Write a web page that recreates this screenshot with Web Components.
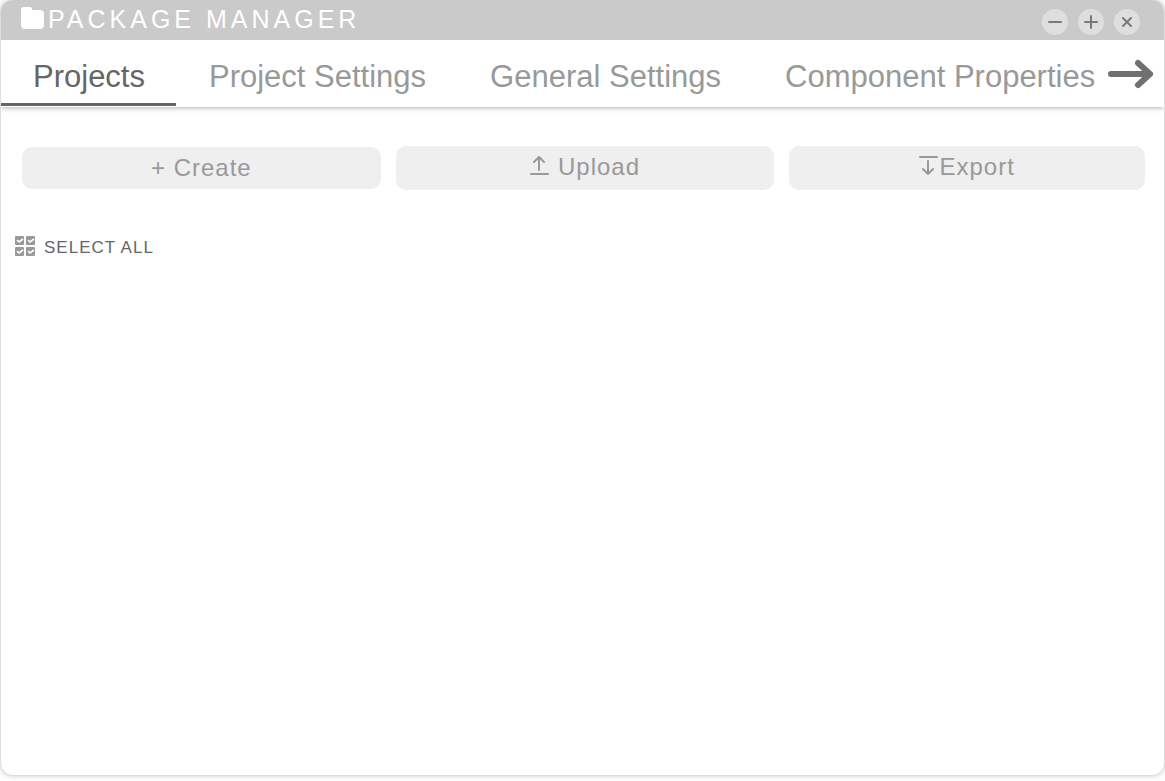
<!DOCTYPE html>
<html lang="en">
<head>
<meta charset="utf-8">
<title>Package Manager</title>
<style>
html, body { margin: 0; height: 100%; }
body { background: #fdfdfd; font-family: "Liberation Sans", Arial, sans-serif; color: #666; }
</style>
</head>
<body>
<package-window>
  <title-bar slot="title">PACKAGE MANAGER</title-bar>
  <tab-bar slot="tabs">
    <tab-item active>Projects</tab-item>
    <tab-item>Project Settings</tab-item>
    <tab-item>General Settings</tab-item>
    <tab-item>Component Properties</tab-item>
  </tab-bar>
  <action-row>
    <action-button class="create">+ Create</action-button>
    <action-button class="upload"><svg slot="icon" width="20" height="24" viewBox="0 0 20 24" fill="none" stroke="#999" stroke-width="2" stroke-linecap="round" stroke-linejoin="round" aria-hidden="true"><path d="M1 19h17M9 15V2M4 7l5-5 5 5"/></svg>Upload</action-button>
    <action-button class="export"><svg slot="icon" width="20" height="24" viewBox="0 0 20 24" fill="none" stroke="#999" stroke-width="2" stroke-linecap="round" stroke-linejoin="round" aria-hidden="true"><path d="M1 2h17M9 6v13M4 14l5 5 5-5"/></svg>Export</action-button>
  </action-row>
  <select-all>SELECT ALL</select-all>
</package-window>

<script>
function define(name, html) {
  const template = document.createElement('template');
  template.innerHTML = html;
  customElements.define(name, class extends HTMLElement {
    constructor() {
      super();
      this.attachShadow({ mode: 'open' }).append(template.content.cloneNode(true));
    }
  });
}

define('package-window', `
<style>
:host { display: block; box-sizing: border-box; height: 100%; padding: 0 1px 6px; overflow: hidden; }
.frame { box-sizing: border-box; height: 100%; background: #fff; border-radius: 12px; box-shadow: 0 0 5px rgba(0,0,0,.3); overflow: hidden; }
main { padding: 38px 19px 0 21px; }
</style>
<section class="frame"><slot name="title"></slot><slot name="tabs"></slot><main><slot></slot></main></section>`);

define('title-bar', `
<style>
:host { display: flex; align-items: center; height: 40px; box-sizing: border-box; padding: 0 24px 0 19px; background: #cacaca; color: #fff; position: relative; z-index: 1; }
h1 { margin: 0 0 0 4px; flex: 1; font-size: 25px; line-height: 38px; padding-bottom: 2px; font-weight: 400; letter-spacing: 4px; white-space: nowrap; }
.folder { margin-bottom: 4px; }
.controls { display: flex; gap: 10px; padding-top: 4px; }
button { display: block; width: 26px; height: 26px; padding: 0; border: 0; border-radius: 50%; background: #dedede; }
button svg { display: block; }
</style>
<svg class="folder" width="24" height="24" viewBox="0 0 24 24" aria-hidden="true"><path fill="#fff" d="M4 1h6q2 0 2 2v1h8q4 0 4 4v11q0 4-4 4H5q-4 0-4-4V4q0-3 3-3z"/></svg>
<h1><slot></slot></h1>
<div class="controls">
<button type="button" aria-label="Minimize"><svg width="26" height="26" viewBox="0 0 26 26" fill="none" stroke="#7a7a7a" stroke-width="2" stroke-linecap="round"><path d="M7 13h12"/></svg></button>
<button type="button" aria-label="Maximize"><svg width="26" height="26" viewBox="0 0 26 26" fill="none" stroke="#7a7a7a" stroke-width="2" stroke-linecap="round"><path d="M7 13h12M13 7v12"/></svg></button>
<button type="button" aria-label="Close"><svg width="26" height="26" viewBox="0 0 26 26" fill="none" stroke="#7a7a7a" stroke-width="2" stroke-linecap="round"><path d="M9 9l8 8M17 9l-8 8"/></svg></button>
</div>`);

define('tab-bar', `
<style>
:host { display: flex; align-items: stretch; height: 67px; background: #fff; box-shadow: 0 1px 5px rgba(0,0,0,.3); }
nav { display: flex; gap: 1px; flex: 1; min-width: 0; overflow: hidden; }
button { flex: none; width: 58px; padding: 0; border: 0; background: none; }
svg { display: block; }
</style>
<nav aria-label="Sections"><slot></slot></nav>
<button type="button" aria-label="More tabs"><svg width="58" height="67" viewBox="0 0 58 67" fill="none" stroke="#707070" stroke-width="6" stroke-linecap="round" stroke-linejoin="round"><path d="M5 34h39M32 23l12 11-12 11"/></svg></button>`);

define('tab-item', `
<style>
:host { display: block; flex: none; color: #999; }
:host([active]) { color: #666; }
button { display: block; height: 66px; box-sizing: border-box; padding: 7px 31px 0 32px; border: 0; border-bottom: 3px solid transparent; background: none; color: inherit; font: 31px/60px "Liberation Sans", Arial, sans-serif; white-space: nowrap; }
:host([active]) button { border-bottom-color: #666; }
</style>
<button type="button"><slot></slot></button>`);

define('action-row', `
<style>
:host { display: grid; grid-template-columns: 359fr 379fr 356fr; gap: 15px; align-items: center; height: 46px; }
</style>
<slot></slot>`);

define('action-button', `
<style>
:host { display: block; }
button { display: flex; width: 100%; height: 44px; align-items: center; justify-content: center; padding: 0 0 2px; border: 0; border-radius: 10px; background: #efefef; color: #999; font: 24px/28px "Liberation Sans", Arial, sans-serif; letter-spacing: 1px; white-space: pre; }
:host(.create) button { height: 42px; padding: 0; }
:host(.upload) button { gap: 8px; }
</style>
<button type="button"><slot name="icon"></slot><span><slot></slot></span></button>`);

define('select-all', `
<style>
:host { display: block; margin: 43px 0 0 -8px; }
button { display: flex; align-items: center; gap: 8px; padding: 0; border: 0; background: none; color: #666; font: 17px/26px "Liberation Sans", Arial, sans-serif; letter-spacing: 1px; }
svg { align-self: flex-start; }
span { padding-top: 1px; }
</style>
<button type="button"><svg width="22" height="24" viewBox="0 -2 22 24" aria-hidden="true"><g fill="#999"><rect x="1" y="0" width="9" height="9" rx="1"/><rect x="12" y="0" width="9" height="9" rx="1"/><rect x="1" y="11" width="9" height="9" rx="1"/><rect x="12" y="11" width="9" height="9" rx="1"/></g><path d="M3 4l2 2 4-3M14 4l2 2 4-3M3 15l2 2 4-3M14 15l2 2 4-3" fill="none" stroke="#fff" stroke-width="1.6"/></svg><span><slot></slot></span></button>`);
</script>
</body>
</html>
